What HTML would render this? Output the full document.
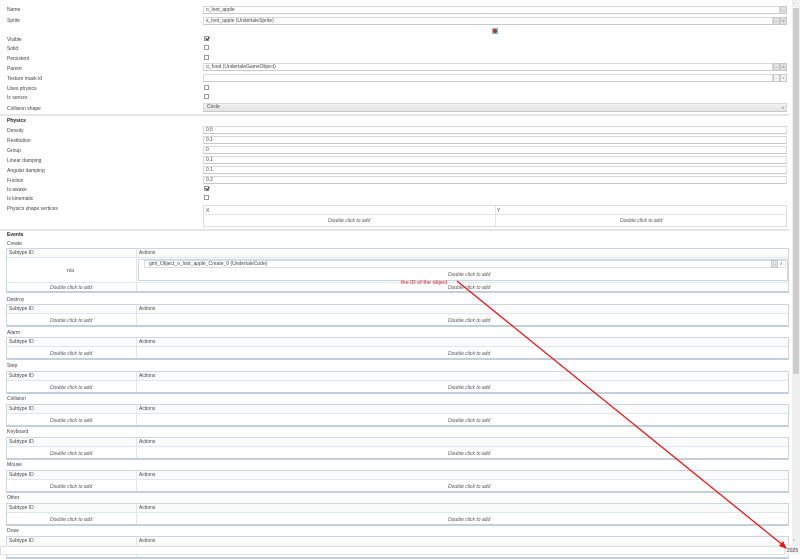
<!DOCTYPE html>
<html><head><meta charset="utf-8"><style>
*{box-sizing:border-box;margin:0;padding:0}
body{width:800px;height:555px;overflow:hidden;background:#fff;position:relative;font-family:"Liberation Sans",sans-serif;font-size:5px;color:#444}
div,span{position:absolute}
.l{left:7px;line-height:6px;white-space:nowrap}
.b{font-weight:bold;color:#222}
.f{left:203px;width:577px;height:8px;border:1px solid #d8d8d8;border-bottom-color:#c8c8c8;background:#fff;padding-left:2px;line-height:6px}
.fw{width:584px}
.btn{width:7px;height:8px;background:#e0e0e0;border:1px solid #c8c8c8;font-size:4px;text-align:center;line-height:6px;color:#666}
.cb{left:204px;width:5px;height:5px;border:1px solid #999;background:#fff}
.ck::after{content:"";position:absolute;left:1px;top:-1px;width:2px;height:3px;border:solid #333;border-width:0 1px 1px 0;transform:rotate(40deg)}
.sep{left:0;width:789px;height:2px;background:#e6e6e6}
.t{left:6px;width:783px;border:1px solid #c9d6e6;border-bottom:2px solid #c3cfdf;background:#fff}
.th{left:0;top:0;width:781px;height:9px;background:#fbfbfb;border-bottom:1px solid #dfe6ee}
.th span{top:2px;line-height:5px}
.dc{font-style:italic;color:#555;white-space:nowrap}
.vd{width:1px;background:#dfe6ee}
</style></head><body>
<!-- scrollbar -->
<div style="left:792px;top:0;width:8px;height:555px;background:#f0f0f0"></div>
<div style="left:793px;top:8px;width:6px;height:366px;background:#cdcdcd"></div>
<div style="left:793px;top:1px;font-size:4px;color:#999">^</div>
<div style="left:793px;top:537px;font-size:4px;color:#999">v</div>

<div class="l" style="top:7px">Name</div>
<div class="f fw" style="top:6px;width:577px">o_loot_apple</div>
<div class="btn" style="left:780px;top:6px">...</div>
<div class="l" style="top:18px">Sprite</div>
<div class="f" style="top:17px;width:570px">s_loot_apple (UndertaleSprite)</div>
<div class="btn" style="left:773px;top:17px">...</div><div class="btn" style="left:780px;top:17px">x</div>
<div style="left:492px;top:28px;width:6px;height:6px;background:#7fb8bd"></div>
<div style="left:494px;top:29px;width:2px;height:4px;background:#c0303a"></div>
<div style="left:493px;top:30px;width:4px;height:2px;background:#c0303a"></div>

<div class="l" style="top:37px">Visible</div><div class="cb ck" style="top:36px"></div>
<div class="l" style="top:46px">Solid</div><div class="cb" style="top:45px"></div>
<div class="l" style="top:56px">Persistent</div><div class="cb" style="top:55px"></div>
<div class="l" style="top:66px">Parent</div>
<div class="f" style="top:63px;width:570px">o_food (UndertaleGameObject)</div>
<div class="btn" style="left:773px;top:63px">...</div><div class="btn" style="left:780px;top:63px">x</div>
<div class="l" style="top:76px">Texture mask id</div>
<div class="f" style="top:74px;width:570px"></div>
<div class="btn" style="left:773px;top:74px;background:#f4f4f4">...</div><div class="btn" style="left:780px;top:74px;background:#f4f4f4">x</div>
<div class="l" style="top:86px">Uses physics</div><div class="cb" style="top:85px"></div>
<div class="l" style="top:95px">Is sensor</div><div class="cb" style="top:94px"></div>
<div class="l" style="top:106px">Collision shape</div>
<div class="f" style="top:103px;width:584px;height:9px;background:linear-gradient(#f2f2f2,#e2e2e2);line-height:7px;padding-left:3px">Circle<span style="right:2px;top:0;font-size:4px;color:#888">▾</span></div>
<div class="sep" style="top:114px"></div>

<div class="l b" style="top:118px">Physics</div>
<div class="l" style="top:128px">Density</div><div class="f" style="top:126px;width:584px">0.5</div>
<div class="l" style="top:138px">Restitution</div><div class="f" style="top:136px;width:584px">0.1</div>
<div class="l" style="top:148px">Group</div><div class="f" style="top:146px;width:584px">0</div>
<div class="l" style="top:158px">Linear damping</div><div class="f" style="top:156px;width:584px">0.1</div>
<div class="l" style="top:168px">Angular damping</div><div class="f" style="top:166px;width:584px">0.1</div>
<div class="l" style="top:178px">Friction</div><div class="f" style="top:176px;width:584px">0.2</div>
<div class="l" style="top:187px">Is awake</div><div class="cb ck" style="top:186px"></div>
<div class="l" style="top:196px">Is kinematic</div><div class="cb" style="top:195px"></div>
<div class="l" style="top:206px">Physics shape vertices</div>
<div style="left:203px;top:205px;width:584px;height:22px;border:1px solid #dcdcdc">
 <div style="left:0;top:0;width:582px;height:9px;border-bottom:1px solid #e4e4e4"><span style="left:2px;top:2px">X</span><span style="left:293px;top:2px">Y</span></div>
 <div class="vd" style="left:291px;top:0;height:20px"></div>
 <span class="dc" style="left:124px;top:12px">Double click to add</span>
 <span class="dc" style="left:416px;top:12px">Double click to add</span>
</div>
<div class="sep" style="top:229px"></div>

<div class="l b" style="top:232px">Events</div>
<div class="l" style="top:241px">Create</div>
<div class="t" style="top:248px;height:45px">
 <div class="th"><span style="left:2px">Subtype ID</span><span style="left:132px">Actions</span></div>
 <div class="vd" style="left:129px;top:0;height:42px"></div>
 <div style="left:0;top:33px;width:781px;height:1px;background:#dfe6ee"></div>
 <span style="left:60px;top:19px">n/a</span>
 <div style="left:131px;top:10px;width:650px;height:22px;border:1px solid #c9d6e6"></div>
 <div style="left:137px;top:11px;width:642px;height:8px;border:1px solid #ddd;padding-left:4px;line-height:6px">gml_Object_o_loot_apple_Create_0 (UndertaleCode)</div>
 <div class="btn" style="left:764px;top:11px;height:8px">...</div>
 <span style="left:773px;top:12px;color:#888">x</span>
 <span class="dc" style="left:441px;top:23px">Double click to add</span>
 <span class="dc" style="left:43px;top:36px">Double click to add</span>
 <span class="dc" style="left:441px;top:36px">Double click to add</span>
</div>

<div class="l" style="top:297px">Destroy</div>
<div class="t" style="top:304px;height:23px"><div class="th"><span style="left:2px">Subtype ID</span><span style="left:132px">Actions</span></div><div class="vd" style="left:129px;top:0;height:20px"></div><span class="dc" style="left:43px;top:13px">Double click to add</span><span class="dc" style="left:441px;top:13px">Double click to add</span></div>
<div class="l" style="top:330px">Alarm</div>
<div class="t" style="top:337px;height:23px"><div class="th"><span style="left:2px">Subtype ID</span><span style="left:132px">Actions</span></div><div class="vd" style="left:129px;top:0;height:20px"></div><span class="dc" style="left:43px;top:13px">Double click to add</span><span class="dc" style="left:441px;top:13px">Double click to add</span></div>
<div class="l" style="top:363px">Step</div>
<div class="t" style="top:371px;height:23px"><div class="th"><span style="left:2px">Subtype ID</span><span style="left:132px">Actions</span></div><div class="vd" style="left:129px;top:0;height:20px"></div><span class="dc" style="left:43px;top:13px">Double click to add</span><span class="dc" style="left:441px;top:13px">Double click to add</span></div>
<div class="l" style="top:396px">Collision</div>
<div class="t" style="top:404px;height:23px"><div class="th"><span style="left:2px">Subtype ID</span><span style="left:132px">Actions</span></div><div class="vd" style="left:129px;top:0;height:20px"></div><span class="dc" style="left:43px;top:13px">Double click to add</span><span class="dc" style="left:441px;top:13px">Double click to add</span></div>
<div class="l" style="top:429px">Keyboard</div>
<div class="t" style="top:437px;height:23px"><div class="th"><span style="left:2px">Subtype ID</span><span style="left:132px">Actions</span></div><div class="vd" style="left:129px;top:0;height:20px"></div><span class="dc" style="left:43px;top:13px">Double click to add</span><span class="dc" style="left:441px;top:13px">Double click to add</span></div>
<div class="l" style="top:462px">Mouse</div>
<div class="t" style="top:470px;height:23px"><div class="th"><span style="left:2px">Subtype ID</span><span style="left:132px">Actions</span></div><div class="vd" style="left:129px;top:0;height:20px"></div><span class="dc" style="left:43px;top:13px">Double click to add</span><span class="dc" style="left:441px;top:13px">Double click to add</span></div>
<div class="l" style="top:495px">Other</div>
<div class="t" style="top:503px;height:23px"><div class="th"><span style="left:2px">Subtype ID</span><span style="left:132px">Actions</span></div><div class="vd" style="left:129px;top:0;height:20px"></div><span class="dc" style="left:43px;top:13px">Double click to add</span><span class="dc" style="left:441px;top:13px">Double click to add</span></div>
<div class="l" style="top:528px">Draw</div>
<div class="t" style="top:536px;height:23px"><div class="th"><span style="left:2px">Subtype ID</span><span style="left:132px">Actions</span></div><div class="vd" style="left:129px;top:0;height:20px"></div></div>

<!-- bottom bar -->
<div style="left:0;top:545px;width:800px;height:10px;background:#f4f4f4"></div>
<div style="left:0;top:546px;width:785px;height:9px;background:#fff;border:1px solid #e0e0e0"></div>
<div style="left:787px;top:548px;font-size:5px;color:#333">2025</div>

<!-- annotation -->
<div style="left:401px;top:280px;color:#e02020;font-size:5.5px;white-space:nowrap">the ID of the object</div>
<svg style="position:absolute;left:0;top:0" width="800" height="555"><line x1="457" y1="281" x2="784" y2="546" stroke="#e51a1a" stroke-width="1.3"/><polygon points="787,549 779,546 783,541" fill="#e51a1a"/></svg>
</body></html>
